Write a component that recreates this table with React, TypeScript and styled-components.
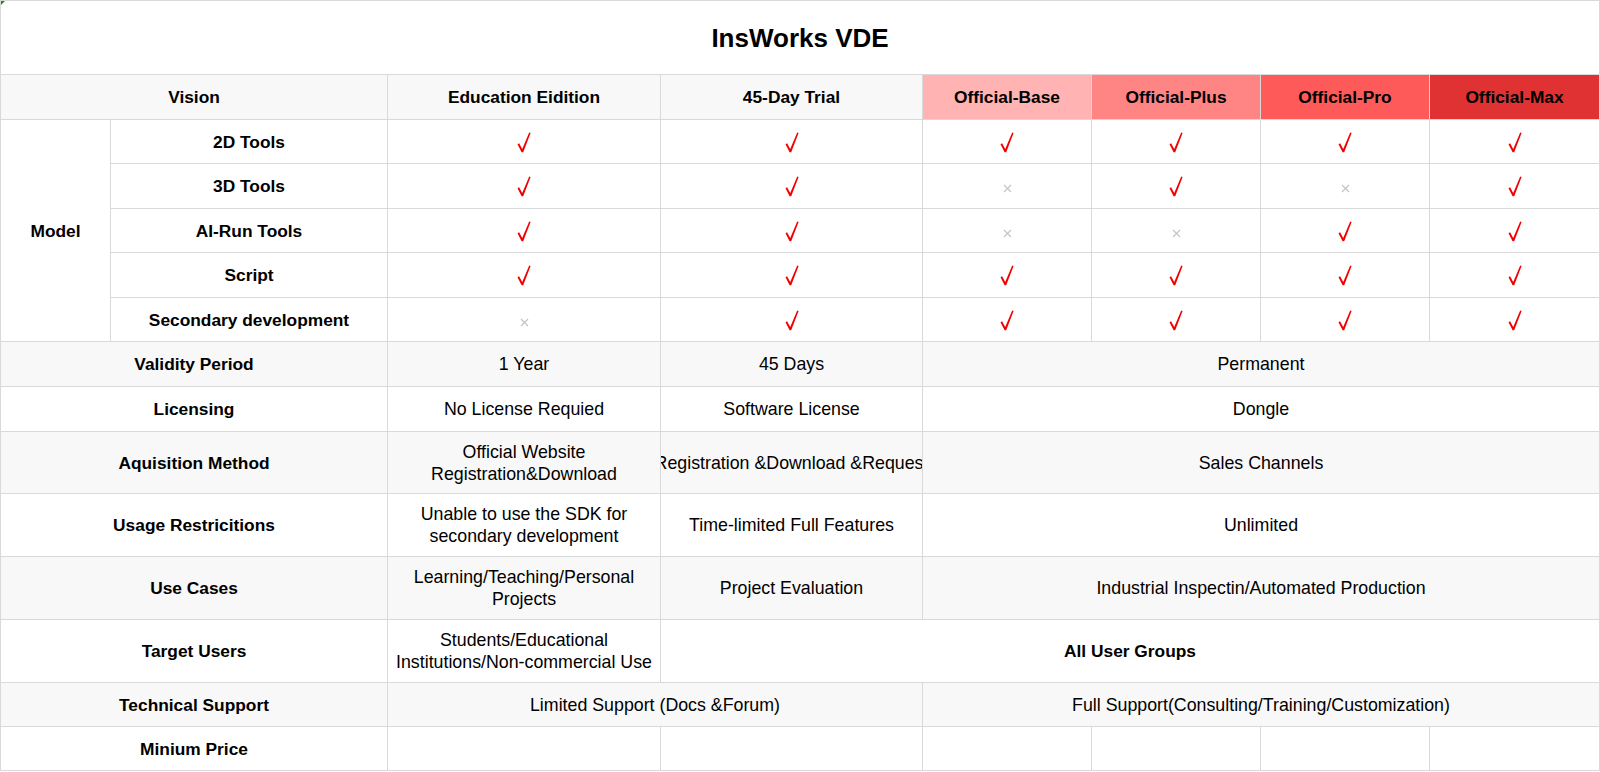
import React from "react";
import styled, { createGlobalStyle } from "styled-components";

const GlobalStyle = createGlobalStyle`
  html, body { margin: 0; padding: 0; background: #ffffff; }
  body { font-family: "Liberation Sans", Arial, sans-serif; color: #000; }
`;

const Sheet = styled.div`
  position: relative;
  width: 1599px;
`;

const Corner = styled.span`
  position: absolute;
  left: 1px;
  top: 1px;
  width: 0;
  height: 0;
  border-top: 4px solid #1e8c2a;
  border-right: 4px solid transparent;
`;

const Table = styled.table`
  width: 1599px;
  border-collapse: collapse;
  table-layout: fixed;
`;

const Row = styled.tr<{ $h: number; $shade?: boolean }>`
  height: ${(p) => p.$h}px;
  background: ${(p) => (p.$shade ? "#f8f8f8" : "#ffffff")};
`;

const Cell = styled.td<{ $bold?: boolean; $bg?: string }>`
  border: 1px solid #d9d9d9;
  padding: 0;
  text-align: center;
  vertical-align: middle;
  font-size: ${(p) => (p.$bold ? "17.33px" : "17.8px")};
  font-weight: ${(p) => (p.$bold ? 700 : 400)};
  line-height: 22px;
  background: ${(p) => p.$bg ?? "transparent"};
  overflow: hidden;
`;

const TitleCell = styled(Cell)`
  font-size: 26px;
  font-weight: 700;
`;

const Clip = styled.div`
  display: flex;
  justify-content: center;
  white-space: nowrap;
  overflow: hidden;
`;

const Mark = styled.span<{ $drop?: number }>`
  display: inline-flex;
  align-items: center;
  justify-content: center;
  vertical-align: middle;
  padding-top: ${(p) => p.$drop ?? 0}px;
`;

const Check = () => (
  <Mark>
    <svg width="14" height="21" viewBox="0 0 14 21">
      <path
        d="M0.5 12.2 L2.1 11.2 L5.2 17.1 L12.2 0.6 L13.6 1.1 L6.2 20.2 L4.6 20.2 Z"
        fill="#f20000"
      />
    </svg>
  </Mark>
);

const Cross = () => (
  <Mark $drop={3}>
    <svg width="9" height="9" viewBox="0 0 9 9">
      <path d="M1 1 L8 8 M8 1 L1 8" stroke="#c4c4c4" strokeWidth="1.2" fill="none" />
    </svg>
  </Mark>
);

type V = "y" | "n";
const features: { name: string; h: number; v: V[] }[] = [
  { name: "2D Tools", h: 44, v: ["y", "y", "y", "y", "y", "y"] },
  { name: "3D Tools", h: 45, v: ["y", "y", "n", "y", "n", "y"] },
  { name: "AI-Run Tools", h: 44, v: ["y", "y", "n", "n", "y", "y"] },
  { name: "Script", h: 45, v: ["y", "y", "y", "y", "y", "y"] },
  { name: "Secondary development", h: 44, v: ["n", "y", "y", "y", "y", "y"] },
];

const tiers = [
  { name: "Official-Base", bg: "#ffb3b3" },
  { name: "Official-Plus", bg: "#ff8484" },
  { name: "Official-Pro", bg: "#ff5a5a" },
  { name: "Official-Max", bg: "#e03232" },
];

const colWidths = [110, 277, 273, 262, 169, 169, 169, 170];

export default function App() {
  return (
    <>
      <GlobalStyle />
      <Sheet>
        <Corner />
        <Table>
          <colgroup>
            {colWidths.map((w, i) => (
              <col key={i} style={{ width: w }} />
            ))}
          </colgroup>
          <tbody>
            <Row $h={74}>
              <TitleCell colSpan={8}>InsWorks VDE</TitleCell>
            </Row>
            <Row $h={45} $shade>
              <Cell colSpan={2} $bold>Vision</Cell>
              <Cell $bold>Education Eidition</Cell>
              <Cell $bold>45-Day Trial</Cell>
              {tiers.map((t) => (
                <Cell key={t.name} $bold $bg={t.bg}>
                  {t.name}
                </Cell>
              ))}
            </Row>
            {features.map((f, i) => (
              <Row key={f.name} $h={f.h}>
                {i === 0 && (
                  <Cell rowSpan={5} $bold>
                    Model
                  </Cell>
                )}
                <Cell $bold>{f.name}</Cell>
                {f.v.map((v, j) => (
                  <Cell key={j}>{v === "y" ? <Check /> : <Cross />}</Cell>
                ))}
              </Row>
            ))}
            <Row $h={45} $shade>
              <Cell colSpan={2} $bold>Validity Period</Cell>
              <Cell>1 Year</Cell>
              <Cell>45 Days</Cell>
              <Cell colSpan={4}>Permanent</Cell>
            </Row>
            <Row $h={45}>
              <Cell colSpan={2} $bold>Licensing</Cell>
              <Cell>No License Requied</Cell>
              <Cell>Software License</Cell>
              <Cell colSpan={4}>Dongle</Cell>
            </Row>
            <Row $h={62} $shade>
              <Cell colSpan={2} $bold>Aquisition Method</Cell>
              <Cell>
                Official Website
                <br />
                Registration&amp;Download
              </Cell>
              <Cell>
                <Clip>Registration &amp;Download &amp;Request</Clip>
              </Cell>
              <Cell colSpan={4}>Sales Channels</Cell>
            </Row>
            <Row $h={63}>
              <Cell colSpan={2} $bold>Usage Restricitions</Cell>
              <Cell>
                Unable to use the SDK for
                <br />
                secondary development
              </Cell>
              <Cell>Time-limited Full Features</Cell>
              <Cell colSpan={4}>Unlimited</Cell>
            </Row>
            <Row $h={63} $shade>
              <Cell colSpan={2} $bold>Use Cases</Cell>
              <Cell>
                Learning/Teaching/Personal
                <br />
                Projects
              </Cell>
              <Cell>Project Evaluation</Cell>
              <Cell colSpan={4}>Industrial Inspectin/Automated Production</Cell>
            </Row>
            <Row $h={63}>
              <Cell colSpan={2} $bold>Target Users</Cell>
              <Cell>
                Students/Educational
                <br />
                Institutions/Non-commercial Use
              </Cell>
              <Cell colSpan={5} $bold>All User Groups</Cell>
            </Row>
            <Row $h={44} $shade>
              <Cell colSpan={2} $bold>Technical Support</Cell>
              <Cell colSpan={2}>Limited Support (Docs &amp;Forum)</Cell>
              <Cell colSpan={4}>Full Support(Consulting/Training/Customization)</Cell>
            </Row>
            <Row $h={44}>
              <Cell colSpan={2} $bold>Minium Price</Cell>
              <Cell />
              <Cell />
              <Cell />
              <Cell />
              <Cell />
              <Cell />
            </Row>
          </tbody>
        </Table>
      </Sheet>
    </>
  );
}
